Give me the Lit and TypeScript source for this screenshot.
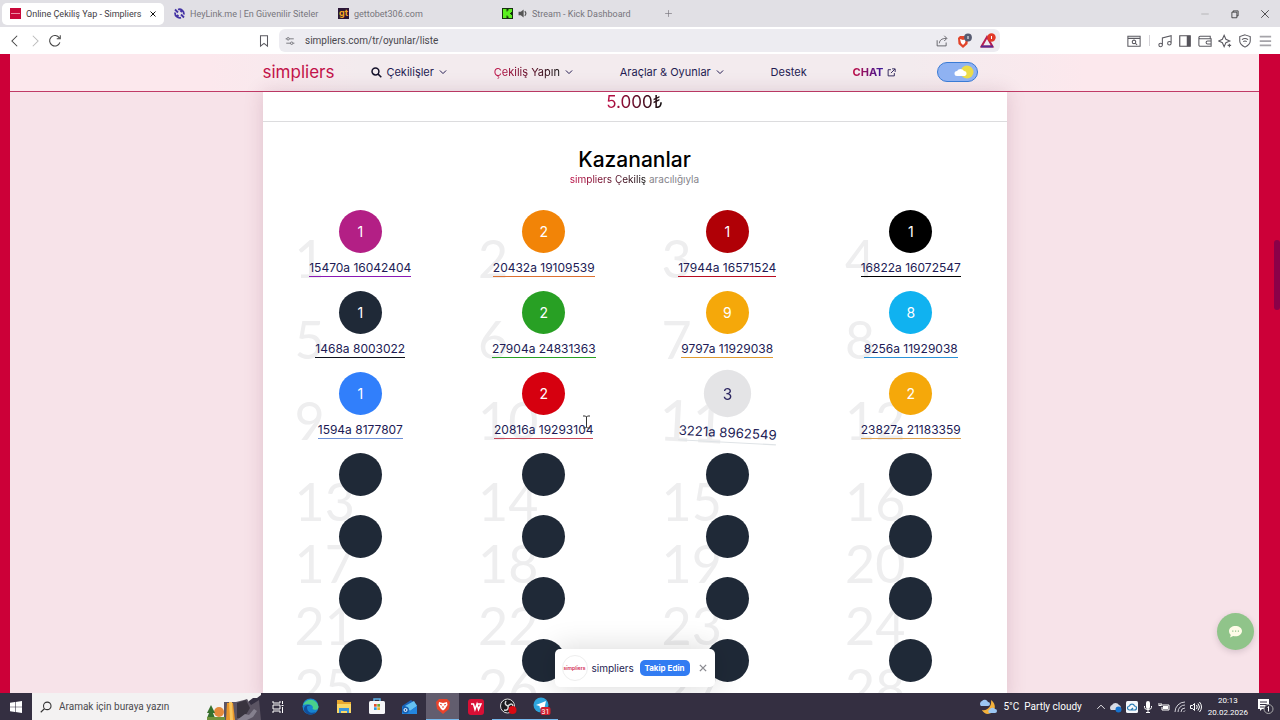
import { LitElement, html, css } from "lit";
import { customElement } from "lit/decorators.js";
import { classMap } from "lit/directives/class-map.js";
import { styleMap } from "lit/directives/style-map.js";

interface Winner {
  no: number;
  ball?: string;
  name?: string;
  color?: string;
  line?: string;
  entering?: boolean;
}

const drawn: Winner[] = [
  { no: 1, ball: "1", name: "15470a 16042404", color: "#b31f85", line: "#8b1ab5" },
  { no: 2, ball: "2", name: "20432a 19109539", color: "#f28407", line: "#dd7030" },
  { no: 3, ball: "1", name: "17944a 16571524", color: "#b00006", line: "#b80c22" },
  { no: 4, ball: "1", name: "16822a 16072547", color: "#000000", line: "#000000" },
  { no: 5, ball: "1", name: "1468a 8003022", color: "#1f2937", line: "#10131c" },
  { no: 6, ball: "2", name: "27904a 24831363", color: "#28a024", line: "#28a024" },
  { no: 7, ball: "9", name: "9797a 11929038", color: "#f5a80a", line: "#e09a30" },
  { no: 8, ball: "8", name: "8256a 11929038", color: "#10b2f0", line: "#2a92d8" },
  { no: 9, ball: "1", name: "1594a 8177807", color: "#317ffb", line: "#6c8fd6" },
  { no: 10, ball: "2", name: "20816a 19293104", color: "#d6000f", line: "#c8485a" },
  { no: 11, ball: "3", name: "3221a 8962549", color: "#e4e4e6", line: "#dfe3e6", entering: true },
  { no: 12, ball: "2", name: "23827a 21183359", color: "#f5a80a", line: "#dda050" },
];
const winners: Winner[] = [
  ...drawn,
  ...Array.from({ length: 16 }, (_, i) => ({ no: 13 + i })),
];

const line = (d: string, size = 14) => html`<svg class="line" width=${size} height=${size} viewBox="0 0 16 16" aria-hidden="true"><path d=${d}></path></svg>`;

const icons = {
  back: "M10.5 2 4.5 8l6 6",
  forward: "M5.5 2l6 6-6 6",
  reload: "M13.6 9.5A6 6 0 1 1 13 4.6M14 1.5v4h-4",
  bookmark: "M4 2h8v12L8 10.800l-4 3.200z",
  tune: "M1 4.5h2M7.500 4.500H14M2 11.500h6.500M13 11.500h2M3 4.500a2 2 0 1 0 4 0a2 2 0 1 0-4 0M8.700 11.500a2 2 0 1 0 4 0a2 2 0 1 0-4 0",
  share: "M1.500 7v7.500h12V10M4.500 11c.3-4 3-6.500 9.500-6.500M11 1l3.500 3.500L11 8",
  find: "M1 2.500h14v11.500H1zM1 5h14M6 9a2 2 0 1 0 4 0a2 2 0 1 0-4 0M9.500 10.500 11.500 12.500",
  music: "M5 12.500V4.500l10-2.500v8.500M1 12.500a2 2 0 1 0 4 0a2 2 0 1 0-4 0M11 10.500a2 2 0 1 0 4 0a2 2 0 1 0-4 0",
  wallet: "M14 5V2.500H2.500a1.500 1.500 0 0 0 0 3H15v8.500H2.500A1.500 1.500 0 0 1 1 12.500V4M15 8h-4a1.700 1.700 0 0 0 0 3.500h4",
  star: "M7 1.500 9 6l4.500 2L9 10 7 14.500 5 10 .8 8 5 6zM13 11v4M11 13h4",
  shield: "M8 1l6 2v5c0 3.500-3 5.500-6 7-3-1.500-6-3.500-6-7V3zM4.500 6.500c2-1.500 5-1.500 7 0M6 8.800c1.200-.9 2.800-.9 4 0M8 10.800v.4",
  chevron: "M3 5.500l5 5 5-5",
  plus: "M8 2v12M2 8h12",
  close: "M3 3l10 10M13 3 3 13",
  search: "M4.700 6.500a5 5 0 1 0 10 0a5 5 0 1 0-10 0M6.200 10 1 15",
  external: "M7 3H2v11h11V9M9 1.500h5.500V7M14 2 7 9",
  up: "M2 11l6-6 6 6",
};

@customElement("browser-chrome")
export class BrowserChrome extends LitElement {
  static styles = css`
    :host { display: block; font: 9px/12px Roboto, sans-serif; color: #77757c; }
    svg { display: block; flex: none; }
    .line { fill: none; stroke: currentColor; stroke-width: 1.2; }
    button { all: unset; display: grid; place-items: center; }
    .tabs { display: flex; align-items: center; height: 27px; background: #e1e0e5; padding: 0 2px; box-sizing: border-box; }
    .tab { display: flex; align-items: center; gap: 5px; width: 164px; height: 22px; padding: 0 9px 0 10px; box-sizing: border-box; white-space: nowrap; }
    .tab.active { width: 162px; padding: 0 7px 0 8px; background: #fff; border-radius: 5px; color: #3f3d44; }
    .tab.active .line { color: #111; stroke-width: 2; }
    .tab .title { flex: 1; }
    .new { padding-left: 8px; }
    .win { display: flex; margin-left: auto; gap: 20px; padding-right: 8px; color: #222; }
    .min { color: #aaa; }
    .bar { display: flex; align-items: center; height: 27px; background: #fff; padding: 0 8px; box-sizing: border-box; color: #5a5960; border-radius: 5px 5px 0 0; }
    .nav { display: flex; gap: 6px; flex: 0 0 249px; color: #444; }
    .nav .off { color: #bbb; }
    .address { display: flex; align-items: center; flex: 1; height: 23px; background: #edecf1; border-radius: 6px; margin-left: 8px; padding: 0 4px 0 6px; gap: 8px; min-width: 0; }
    .address input { all: unset; flex: 1; color: #49474d; font-size: 10px; line-height: 12px; padding-left: 2px; }
    .tools { display: flex; align-items: center; gap: 6px; margin-left: 127px; }
    .menu .line { color: #a5a4a9; stroke-width: 2; }
    .sep { width: 1px; height: 11px; background: #d5d3d8; margin: 0 2px; }
  `;
  render() {
    return html`
      <div class="tabs">
        <div class="tab active">
          <svg width="11" height="11" viewBox="0 0 11 11"><path fill="#c9083a" d="M0 0h11v11H0z"/><path stroke="#ed8da5" d="M1 5.500h9"/></svg>
          <span class="title">Online Çekiliş Yap - Simpliers</span>
          <button aria-label="Sekmeyi kapat">${line(icons.close, 8)}</button>
        </div>
        <div class="tab">
          <svg width="11" height="11" viewBox="0 0 11 11" fill="none" stroke="#4534a4" stroke-width="1.800"><path d="M4 1.500A4.500 4.500 0 0 1 9.800 6.500M7 9.600A4.500 4.500 0 0 1 1.200 4.500M1 1.500l3 3M7 6.500l3 3M3 7l1.500 1.500M6.500 2.500 8 4"/></svg>
          <span class="title">HeyLink.me | En Güvenilir Siteler</span>
        </div>
        <div class="tab">
          <svg width="11" height="11" viewBox="0 0 11 11"><path fill="#2b1637" d="M0 0h11v11H0z"/><text x="5.500" y="8" text-anchor="middle" font-family="Inter" font-weight="700" font-size="9" fill="#f5a623">gt</text></svg>
          <span class="title">gettobet306.com</span>
        </div>
        <div class="tab">
          <svg width="11" height="11" viewBox="0 0 11 11"><path fill="#16320d" d="M0 0h11v11H0z"/><path fill="#5bef1f" d="M1 1h3.500v2.500h1V2.500h1V1H10v3H9v1H8v1h1v1h1v3H6.500V8.500h-1v-1h-1V10H1z"/></svg>
          <svg width="9" height="9" viewBox="0 0 16 16"><path fill="#555" d="M1 5h4l5-4v14l-5-4H1z"/><path d="M12 4q4 4 0 8" fill="none" stroke="#555" stroke-width="2"/></svg>
          <span class="title">Stream - Kick Dashboard</span>
        </div>
        <button class="new" aria-label="Yeni sekme">${line(icons.plus, 9)}</button>
        <div class="win">
          <button class="min" aria-label="Küçült">${line("M2 8h12", 10)}</button>
          <button aria-label="Geri yükle">${line("M3 5h8v9H3zM5 5V3h8v8h-2", 10)}</button>
          <button aria-label="Kapat">${line("M2 2l12 12M14 2 2 14", 10)}</button>
        </div>
      </div>
      <div class="bar">
        <div class="nav">
          <button aria-label="Geri">${line(icons.back)}</button>
          <button class="off" aria-label="İleri">${line(icons.forward)}</button>
          <button aria-label="Yenile">${line(icons.reload)}</button>
        </div>
        <button aria-label="Yer imi">${line(icons.bookmark)}</button>
        <div class="address">
          ${line(icons.tune, 10)}
          <input aria-label="Adres" value="simpliers.com/tr/oyunlar/liste" />
          <button aria-label="Paylaş">${line(icons.share, 12)}</button>
          <svg width="16" height="16" viewBox="0 0 16 16"><path fill="#e2452b" d="M2 5l2-2h6l2 2-.5 6L7 15l-4.500-4z"/><path fill="#fff" d="M4 6l3 1 3-1-1 4-2 2-2-2z"/><circle cx="12" cy="4.500" r="3.900" fill="#565a70"/><path stroke="#fff" d="M12 3v3"/></svg>
          <svg width="16" height="16" viewBox="0 0 16 16"><path fill="none" stroke="#b71d50" stroke-width="2" d="M7 4 1.500 13.500h11z"/><path stroke="#5a2a90" stroke-width="2" d="M1 13.500h12"/><circle cx="11.500" cy="4.500" r="4.200" fill="#e23a28"/><path stroke="#fff" d="M11.500 3v3"/></svg>
        </div>
        <div class="tools">
          <button aria-label="Sayfada ara">${line(icons.find)}</button>
          <span class="sep"></span>
          <button aria-label="Müzik">${line(icons.music)}</button>
          <button aria-label="Kenar çubuğu"><svg width="14" height="14" viewBox="0 0 16 16"><path fill="none" stroke="#55535a" stroke-width="1.300" d="M2 2h12v12H2z"/><path fill="#55535a" d="M10 2h4v12h-4z"/></svg></button>
          <button aria-label="Cüzdan">${line(icons.wallet)}</button>
          <button aria-label="Leo">${line(icons.star)}</button>
          <button aria-label="VPN">${line(icons.shield)}</button>
          <button class="menu" aria-label="Menü">${line("M2 3h13M2 8h13M2 13h13")}</button>
        </div>
      </div>
    `;
  }
}

@customElement("winner-card")
export class WinnerCard extends LitElement {
  static properties = { winner: { attribute: false } };
  declare winner: Winner;
  static styles = css`
    :host { display: block; }
    .card { position: relative; display: flex; flex-direction: column; align-items: center; height: 62px; font-family: Inter, sans-serif; }
    .card.done { height: 81px; }
    .rank { position: absolute; left: -4px; top: 24px; font: 400 52px/48px Lato, sans-serif; color: #eeeeef; }
    .ball { position: relative; width: 43px; height: 43px; border-radius: 50%; display: grid; place-items: center; color: #fff; background: #1f2937; font-size: 14px; line-height: 20px; }
    .name { position: relative; margin-top: 7px; border-bottom: 1px solid; font-size: 12px; line-height: 16px; color: #211b55; text-decoration: none; white-space: nowrap; }
    .entering .ball { transform: scale(1.1); color: #2b2560; }
    .entering .name { transform: rotate(3deg) scale(1.1); margin-top: 10px; }
    .entering .rank { transform: rotate(3deg) scale(1.1); }
  `;
  render() {
    const w = this.winner;
    return html`<div class=${classMap({ card: true, done: !!w.name, entering: !!w.entering })}>
      <span class="rank">${w.no}</span>
      <span class="ball" style=${styleMap(w.color ? { background: w.color } : {})}>${w.ball ?? ""}</span>
      ${w.name ? html`<a class="name" href="#" style=${styleMap({ borderColor: w.line })}>${w.name}</a>` : ""}
    </div>`;
  }
}

@customElement("site-page")
export class SitePage extends LitElement {
  static styles = css`
    :host { position: relative; display: block; overflow: hidden; box-sizing: border-box; padding: 0 21px 0 10px; background: #cc0038; font: 11px/16px Inter, sans-serif; color: #241b52; }
    .body { background: #f7e3e9; height: 100%; overflow: hidden; }
    .thumb { position: absolute; right: 0; top: 186px; width: 6px; height: 70px; border-radius: 3px; background: #8b0048; }
    svg { display: block; flex: none; }
    .line { fill: none; stroke: currentColor; stroke-width: 1.6; }
    a { color: inherit; text-decoration: none; }
    header { height: 38px; box-sizing: border-box; border-bottom: 1px solid #c03a66; background: linear-gradient(90deg, #fce8ed 16%, #f3ebee 28%, #f3ebee 72%, #fce8ed 86%) padding-box; }
    .inner { width: 744px; max-width: 100%; margin: 0 auto; height: 36px; display: flex; align-items: center; }
    .menu { display: flex; align-items: center; flex: 1; justify-content: space-between; margin: 0 40px 0 37px; }
    .menu a, .menu button { display: flex; align-items: center; gap: 4px; }
    button { all: unset; box-sizing: border-box; }
    .brand { font-size: 17px; line-height: 24px; color: #c2124a; }
    .two { background: linear-gradient(90deg, #c00d45, #111); -webkit-background-clip: text; background-clip: text; color: transparent; }
    .chat { font-weight: 700; background: linear-gradient(90deg, #c00d45, #3a1a9c); -webkit-background-clip: text; background-clip: text; color: transparent; }
    .toggle { width: 41px; height: 20px; border: 1px solid #3a7bd5; border-radius: 10px; background: #8fb2f2; display: flex; justify-content: flex-end; align-items: center; padding-right: 3px; margin-right: 29px; }
    main { width: 744px; max-width: 100%; margin: 0 auto; background: #fff; box-shadow: 0 0 18px rgba(120, 40, 80, .18); }
    .prize { height: 30px; box-sizing: border-box; border-bottom: 1px solid #dcdcde; text-align: center; font-size: 17px; line-height: 20px; }
    .title { text-align: center; padding-top: 25px; }
    h1 { margin: 0; font-size: 21px; line-height: 26px; font-weight: 500; color: #000; }
    .sub { margin: 0; font-size: 10px; line-height: 12px; color: #85838a; }
    .grid { display: grid; grid-template-columns: repeat(4, 1fr); padding: 25px 4px 0 6px; }
    .cell { padding: 0 30px; }
    .toast { position: absolute; left: 10px; right: 21px; margin: 0 auto; bottom: 6px; display: flex; align-items: center; gap: 4px; width: 160px; height: 38px; box-sizing: border-box; padding: 0 7px; background: #fff; border-radius: 5px; box-shadow: 0 0 30px rgba(0, 0, 0, .16); font-size: 10px; }
    .logo { width: 26px; height: 26px; box-sizing: border-box; border: 1px solid #eee; border-radius: 50%; display: grid; place-items: center; color: #d22c54; font-size: 5px; font-weight: 600; }
    .follow { margin: 0 4px 0 auto; height: 16px; width: 50px; border-radius: 5px; background: #327cf2; color: #fff; font-size: 8px; line-height: 16px; font-weight: 700; text-align: center; }
    .x .line { color: #8c8c92; stroke-width: 2.2; }
    .help { position: absolute; right: 26px; bottom: 43px; width: 37px; height: 37px; border-radius: 50%; background: #90c48a; display: grid; place-items: center; box-shadow: 0 2px 6px rgba(80, 60, 80, .2); }
    .cursor { position: absolute; left: 582px; top: 361px; }
  `;
  render() {
    return html`
      <div class="body">
      <header><div class="inner">
        <a class="brand" href="#">simpliers</a>
        <nav class="menu">
          <button><svg width="11" height="11" viewBox="0 0 16 16" fill="none" stroke="#15122b" stroke-width="2.200"><path d="M1.500 6.500a5 5 0 1 0 10 0a5 5 0 1 0-10 0M10 10l5 5"/></svg>Çekilişler ${line(icons.chevron, 10)}</button>
          <button><span class="two">Çekiliş Yapın</span> ${line(icons.chevron, 10)}</button>
          <button>Araçlar &amp; Oyunlar ${line(icons.chevron, 10)}</button>
          <a href="#">Destek</a>
          <a href="#"><span class="chat">CHAT</span>${line(icons.external, 9)}</a>
        </nav>
        <button class="toggle" role="switch" aria-checked="false" aria-label="Tema"><svg width="20" height="14" viewBox="0 0 20 14"><circle cx="13" cy="7" r="6.500" fill="#ecdc48"/><path fill="#fff" d="M3 11a2.500 2.500 0 0 1 0-5 4 4 0 0 1 7 0 2.600 2.600 0 0 1 1 5z"/></svg></button>
      </div></header>
      <main>
        <div class="prize"><span class="two">5.000₺</span></div>
        <div class="title">
          <h1>Kazananlar</h1>
          <p class="sub"><span class="two">simpliers Çekiliş</span> aracılığıyla</p>
        </div>
        <div class="grid">${winners.map((w) => html`<div class="cell"><winner-card .winner=${w}></winner-card></div>`)}</div>
      </main>
      </div>
      <span class="thumb"></span>
      <svg class="cursor" width="9" height="14" viewBox="0 0 9 14"><path d="M1 1h2.500l1 1 1-1H8M4.500 2v10M1 13h2.500l1-1 1 1H8" fill="none" stroke="#333"/></svg>
      <div class="toast"><span class="logo">simpliers</span><span>simpliers</span><button class="follow">Takip Edin</button><button class="x" aria-label="Kapat">${line(icons.close, 10)}</button></div>
      <button class="help" aria-label="Destek sohbeti"><svg width="13" height="12" viewBox="0 0 13 12"><path fill="#fffbe8" d="M6.500 0C10 0 13 2 13 5s-3 5.300-6.500 5.300c-.8 0-1.600-.1-2.300-.3L1 11.500l.8-2.600C.6 8 0 6.500 0 5 0 2 3 0 6.500 0z"/><path stroke="#90c48a" stroke-width="1.200" stroke-dasharray="1.200 1.600" d="M3.200 5.200h7"/></svg></button>
    `;
  }
}

@customElement("task-bar")
export class TaskBar extends LitElement {
  static styles = css`
    :host { display: flex; align-items: stretch; height: 27px; background: #342f41; color: #fff; font: 10px/14px Roboto, sans-serif; overflow: hidden; }
    svg { display: block; flex: none; }
    .line { fill: none; stroke: currentColor; stroke-width: 1.4; }
    button { all: unset; display: grid; place-items: center; width: 33px; box-sizing: border-box; flex: none; }
    .start { width: 32px; }
    .search { display: flex; align-items: center; width: 229px; background: #f3f2f2; color: #333; padding-left: 8px; box-sizing: border-box; gap: 7px; }
    .search input { all: unset; flex: 1; min-width: 0; font-size: 10px; }
    .search input::placeholder { color: #4b4a4e; }
    .open { border-bottom: 1px solid #76b9ed; }
    .active { background: #625d6e; }
    .tray { display: flex; align-items: center; margin-left: auto; gap: 4px; padding-right: 5px; }
    .weather { margin: 0 10px 0 2px; white-space: pre; }
    .clock { display: grid; text-align: center; font-size: 8px; line-height: 12px; margin: 0 5px 0 2px; }
  `;
  render() {
    return html`
      <button class="start" aria-label="Başlat"><svg width="12" height="12" viewBox="0 0 12 12"><path fill="#fff" d="M0 1.700 5 1v4.700H0zM5.600.9 12 0v5.700H5.600zM0 6.300h5V11l-5-.7zM5.600 6.300H12V12l-6.400-.9z"/></svg></button>
      <label class="search">${line(icons.search, 12)}<input placeholder="Aramak için buraya yazın" aria-label="Arama" />
        <svg width="54" height="27" viewBox="0 0 54 27"><path fill="#342f41" d="M42 8l4-3h4l4-3v25H40z"/><path fill="#5b5463" d="M17 9l12 0 8-2 3-1 4 6 8-5 2 20H17z"/><path fill="#39343f" d="M30 10l9-3 4 8-6 10h-7z"/><path fill="#e8962a" d="M20 10h6l2 17h-9z"/><path fill="#f7c45c" d="M22 9h3l1 18h-3z"/><circle cx="12" cy="19" r="5" fill="#e58a3c"/><path fill="#36702d" d="M4 12 0 20h2l-2 5h8l-2-5h2z"/><path fill="#70933c" d="M0 24h18v3H0z"/><path fill="#85808e" d="M30 27l8-6 4 1 5-6 3 2-4 6-6 3z"/></svg></label>
      <button aria-label="Görev görünümü"><svg width="12" height="12" viewBox="0 0 12 12" fill="none" stroke="#fff"><path d="M1 0v2h7V0M1 4h7v4H1zM1 12v-2h7v2M10.500 0v3M10.500 6v6M9.500 4.500h2"/></svg></button>
      <button aria-label="Edge"><svg width="17" height="17" viewBox="0 0 17 17"><circle cx="8.500" cy="8.500" r="8" fill="#1784d1"/><path fill="#49cf8b" d="M1 7a8 8 0 0 1 15.500 2c0 3-4.500 3.500-6 2 2-4-4-6-9.500-4z"/><path fill="#124f9b" d="M5 9c0 5 4 7 9 5-4 5-13 2-12-4 1-3 5-4 7-2-2-.5-4 0-4 1z"/></svg></button>
      <button aria-label="Dosya Gezgini"><svg width="16" height="15" viewBox="0 0 16 15"><path fill="#e9a92f" d="M1 1h5l2 2h7v11H1z"/><path fill="#fbd865" d="M1 5h14v9H1z"/><path fill="#3c96db" d="M3 14V9h10v5h-2v-2H5v2z"/></svg></button>
      <button aria-label="Store"><svg width="16" height="17" viewBox="0 0 16 17"><path fill="none" stroke="#5cb3e8" stroke-width="1.500" d="M5 4V1h6v3"/><rect y="3" width="16" height="13" rx="1.500" fill="#f6f6f8"/><path fill="#e34f2b" d="M5 6h2.700v2.700H5z"/><path fill="#6fa832" d="M8.300 6H11v2.700H8.300z"/><path fill="#2b9be0" d="M5 9.300h2.700V12H5z"/><path fill="#eeb020" d="M8.300 9.300H11V12H8.300z"/></svg></button>
      <button aria-label="Posta"><svg width="17" height="16" viewBox="0 0 17 16"><path fill="#1b63b8" d="M1 7 10 1l6 5v9H1z"/><path fill="#65c2f2" d="M4 7l9-5 3 5-7 5z"/><path fill="#2386df" d="M1 8l8 4 7-5v8H1z"/><circle cx="4.500" cy="11" r="3.500" fill="#1460b4"/><circle cx="4.500" cy="11" r="1.500" fill="none" stroke="#fff"/></svg></button>
      <button class="open active" aria-label="Brave"><svg width="14" height="16" viewBox="0 0 14 16"><path fill="#e9432b" d="M3 1h8l3 3-1 7-6 5-6-5-1-7z"/><path fill="#fff" d="M3 4l4 1 4-1 .5 3L9 11l-2 1.500L5 11 2.500 7z"/><path stroke="#e9432b" d="M4 6.500l2 .5M10 6.500 8 7M7 8v2"/></svg></button>
      <button aria-label="WPS"><svg width="16" height="16" viewBox="0 0 16 16"><rect width="16" height="16" rx="3" fill="#d90f35"/><path fill="none" stroke="#fff" stroke-width="1.500" d="M3 5h2.500L7 10.500 9 5l1.500 5.500L13 5H9"/></svg></button>
      <button class="open" aria-label="OBS"><svg width="17" height="17" viewBox="0 0 17 17"><circle cx="7.500" cy="8" r="7" fill="#1c1c20" stroke="#ddd"/><path fill="none" stroke="#d8d8d8" stroke-width="1.500" d="M6 3q-2 4 2 5M8 8q4-4 5 0M8 8q1 5-4 4"/><circle cx="12.500" cy="12" r="4" fill="#d90a12"/></svg></button>
      <button class="open" aria-label="Telegram"><svg width="18" height="18" viewBox="0 0 18 18"><circle cx="8" cy="8" r="7.500" fill="#2ea5dc"/><path fill="#fff" d="M3 8l10-4-2 9-3-2-1 1-.5-3z"/><rect x="7.500" y="10" width="10" height="8" rx="2" fill="#d3202f"/><text x="12.500" y="16.500" text-anchor="middle" font-family="Roboto" font-size="7" fill="#fff">31</text></svg></button>
      <div class="tray">
        <svg width="17" height="16" viewBox="0 0 17 16"><path fill="#f3b13b" d="M11 1c6 4 5 13-3 14-3 0-5-2-6-4 6 1 10-4 9-10z"/><path fill="#9cc7f2" d="M1 7a3 3 0 0 1 1-5 3.500 3.500 0 0 1 6 1 2 2 0 0 1 0 4zM9 14a2.500 2.500 0 0 1 1-4 3 3 0 0 1 5 0 2 2 0 0 1 0 4z"/></svg>
        <span class="weather">5°C  Partly cloudy</span>
        ${line(icons.up, 10)}
        <svg width="12" height="12" viewBox="0 0 12 12"><path fill="#d8dbe5" d="M1 9a3 3 0 0 1 1-5 4 4 0 0 1 7 0 3 3 0 0 1 1 5z"/><circle cx="8.500" cy="8.500" r="3" fill="#1673cf"/></svg>
        <svg width="12" height="12" viewBox="0 0 12 12"><rect width="12" height="12" rx="1.500" fill="#f5f8fb"/><path fill="none" stroke="#287bb4" stroke-width="1.200" d="M3.500 9a2 2 0 0 1 0-4 2.600 2.600 0 0 1 5 0 2 2 0 0 1 0 4zM5 9l2-2"/></svg>
        <svg width="12" height="12" viewBox="0 0 12 12"><rect x="4" width="4" height="8" rx="2" fill="#fff"/><path fill="none" stroke="#fff" d="M2.500 5v1.500q0 2 3.500 2t3.500-2V5M6 8v3M4 11.500h4"/></svg>
        <svg width="12" height="12" viewBox="0 0 12 12"><path fill="none" stroke="#fff" d="M3 4h8v5H4V6M1 2v2M3 2v2M.5 4.500h3"/><path fill="#fff" d="M5 5h5v3H5z"/></svg>
        <svg width="12" height="12" viewBox="0 0 12 12" fill="none" stroke="#d2d0d8"><path d="M1 11A10 10 0 0 1 11 1M4 11a7 7 0 0 1 7-7M7 11a4 4 0 0 1 4-4M9.500 11 11 9.500"/></svg>
        <svg width="12" height="12" viewBox="0 0 12 12" fill="none" stroke="#fff"><path d="M.5 4.500h2l2-2v7l-2-2h-2zM6.500 4q1.500 2 0 4M8 2.500q3 3.500 0 7M9.500 1q4 5 0 10"/></svg>
        <span class="clock"><span>20:13</span><span>20.02.2026</span></span>
        <svg width="18" height="17" viewBox="0 0 18 17"><path fill="#fff" d="M1 1h11v10H5l-2 2v-2H1z"/><path stroke="#342f41" d="M3 4h7M3 6.500h7M3 9h4"/><circle cx="11.500" cy="11" r="4.500" fill="#342f41" stroke="#aaa"/><path stroke="#fff" d="M10.500 9.500l1-1v5"/></svg>
      </div>
    `;
  }
}

@customElement("app-root")
export class AppRoot extends LitElement {
  static styles = css`
    :host { display: flex; flex-direction: column; height: 100vh; overflow: hidden; background: #fff; }
    site-page { flex: 1; min-height: 0; }
    browser-chrome, task-bar { flex: none; }
  `;
  render() {
    return html`<browser-chrome></browser-chrome><site-page></site-page><task-bar></task-bar>`;
  }
}
